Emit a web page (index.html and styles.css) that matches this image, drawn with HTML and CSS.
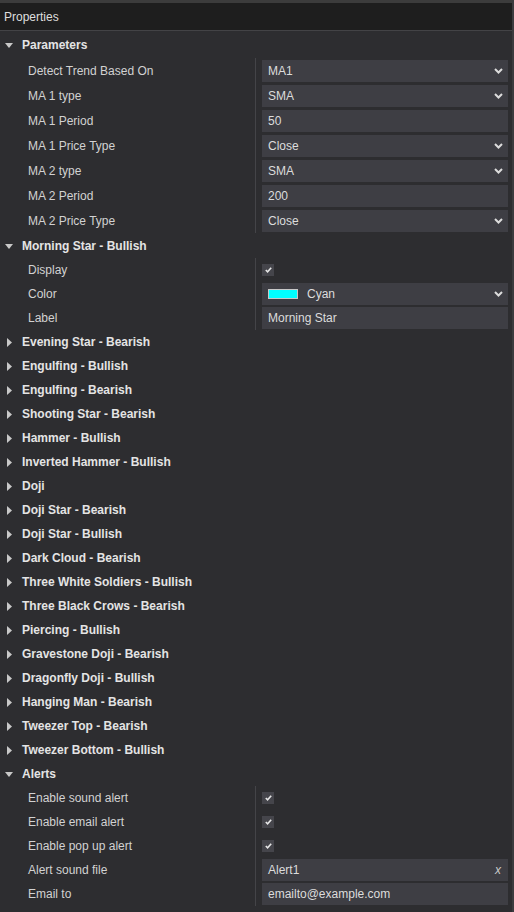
FILE: index.html
```html
<!DOCTYPE html>
<html>
<head>
<meta charset="utf-8">
<link rel="stylesheet" href="styles.css">
</head>
<body>
<div class="panel">
  <div class="titlebar">Properties</div>
  <div class="content">

    <div class="group params">
      <div class="ghead"><span class="tri"><svg width="8" height="5" viewBox="0 0 8 5"><polygon points="0,0 8,0 4,5" fill="#c8c8c8"/></svg></span><span class="gtitle">Parameters</span></div>
      <div class="gbody">
        <div class="row prow"><div class="lbl">Detect Trend Based On</div><div class="val"><div class="field select"><span>MA1</span><svg class="chev" width="9" height="6" viewBox="0 0 9 6"><polyline points="1,1 4.5,4.5 8,1" fill="none" stroke="#dcdcdc" stroke-width="2"/></svg></div></div></div>
        <div class="row prow"><div class="lbl">MA 1 type</div><div class="val"><div class="field select"><span>SMA</span><svg class="chev" width="9" height="6" viewBox="0 0 9 6"><polyline points="1,1 4.5,4.5 8,1" fill="none" stroke="#dcdcdc" stroke-width="2"/></svg></div></div></div>
        <div class="row prow"><div class="lbl">MA 1 Period</div><div class="val"><div class="field"><span>50</span></div></div></div>
        <div class="row prow"><div class="lbl">MA 1 Price Type</div><div class="val"><div class="field select"><span>Close</span><svg class="chev" width="9" height="6" viewBox="0 0 9 6"><polyline points="1,1 4.5,4.5 8,1" fill="none" stroke="#dcdcdc" stroke-width="2"/></svg></div></div></div>
        <div class="row prow"><div class="lbl">MA 2 type</div><div class="val"><div class="field select"><span>SMA</span><svg class="chev" width="9" height="6" viewBox="0 0 9 6"><polyline points="1,1 4.5,4.5 8,1" fill="none" stroke="#dcdcdc" stroke-width="2"/></svg></div></div></div>
        <div class="row prow"><div class="lbl">MA 2 Period</div><div class="val"><div class="field"><span>200</span></div></div></div>
        <div class="row prow"><div class="lbl">MA 2 Price Type</div><div class="val"><div class="field select"><span>Close</span><svg class="chev" width="9" height="6" viewBox="0 0 9 6"><polyline points="1,1 4.5,4.5 8,1" fill="none" stroke="#dcdcdc" stroke-width="2"/></svg></div></div></div>
      </div>
    </div>

    <div class="group">
      <div class="ghead"><span class="tri"><svg width="8" height="5" viewBox="0 0 8 5"><polygon points="0,0 8,0 4,5" fill="#c8c8c8"/></svg></span><span class="gtitle">Morning Star - Bullish</span></div>
      <div class="gbody">
        <div class="row"><div class="lbl">Display</div><div class="val"><span class="check"><svg width="7" height="6" viewBox="0 0 7 6"><polyline points="0.8,3 2.6,4.8 6.2,0.8" fill="none" stroke="#e6e6e6" stroke-width="1.6"/></svg></span></div></div>
        <div class="row"><div class="lbl">Color</div><div class="val"><div class="field select"><span class="swatch"></span><span class="cname">Cyan</span><svg class="chev" width="9" height="6" viewBox="0 0 9 6"><polyline points="1,1 4.5,4.5 8,1" fill="none" stroke="#dcdcdc" stroke-width="2"/></svg></div></div></div>
        <div class="row"><div class="lbl">Label</div><div class="val"><div class="field"><span>Morning Star</span></div></div></div>
      </div>
    </div>

    <div class="group closed"><div class="ghead"><span class="tri"><svg width="5" height="9" viewBox="0 0 5 9"><polygon points="0,0 5,4.5 0,9" fill="#c8c8c8"/></svg></span><span class="gtitle">Evening Star - Bearish</span></div></div>
    <div class="group closed"><div class="ghead"><span class="tri"><svg width="5" height="9" viewBox="0 0 5 9"><polygon points="0,0 5,4.5 0,9" fill="#c8c8c8"/></svg></span><span class="gtitle">Engulfing - Bullish</span></div></div>
    <div class="group closed"><div class="ghead"><span class="tri"><svg width="5" height="9" viewBox="0 0 5 9"><polygon points="0,0 5,4.5 0,9" fill="#c8c8c8"/></svg></span><span class="gtitle">Engulfing - Bearish</span></div></div>
    <div class="group closed"><div class="ghead"><span class="tri"><svg width="5" height="9" viewBox="0 0 5 9"><polygon points="0,0 5,4.5 0,9" fill="#c8c8c8"/></svg></span><span class="gtitle">Shooting Star - Bearish</span></div></div>
    <div class="group closed"><div class="ghead"><span class="tri"><svg width="5" height="9" viewBox="0 0 5 9"><polygon points="0,0 5,4.5 0,9" fill="#c8c8c8"/></svg></span><span class="gtitle">Hammer - Bullish</span></div></div>
    <div class="group closed"><div class="ghead"><span class="tri"><svg width="5" height="9" viewBox="0 0 5 9"><polygon points="0,0 5,4.5 0,9" fill="#c8c8c8"/></svg></span><span class="gtitle">Inverted Hammer - Bullish</span></div></div>
    <div class="group closed"><div class="ghead"><span class="tri"><svg width="5" height="9" viewBox="0 0 5 9"><polygon points="0,0 5,4.5 0,9" fill="#c8c8c8"/></svg></span><span class="gtitle">Doji</span></div></div>
    <div class="group closed"><div class="ghead"><span class="tri"><svg width="5" height="9" viewBox="0 0 5 9"><polygon points="0,0 5,4.5 0,9" fill="#c8c8c8"/></svg></span><span class="gtitle">Doji Star - Bearish</span></div></div>
    <div class="group closed"><div class="ghead"><span class="tri"><svg width="5" height="9" viewBox="0 0 5 9"><polygon points="0,0 5,4.5 0,9" fill="#c8c8c8"/></svg></span><span class="gtitle">Doji Star - Bullish</span></div></div>
    <div class="group closed"><div class="ghead"><span class="tri"><svg width="5" height="9" viewBox="0 0 5 9"><polygon points="0,0 5,4.5 0,9" fill="#c8c8c8"/></svg></span><span class="gtitle">Dark Cloud - Bearish</span></div></div>
    <div class="group closed"><div class="ghead"><span class="tri"><svg width="5" height="9" viewBox="0 0 5 9"><polygon points="0,0 5,4.5 0,9" fill="#c8c8c8"/></svg></span><span class="gtitle">Three White Soldiers - Bullish</span></div></div>
    <div class="group closed"><div class="ghead"><span class="tri"><svg width="5" height="9" viewBox="0 0 5 9"><polygon points="0,0 5,4.5 0,9" fill="#c8c8c8"/></svg></span><span class="gtitle">Three Black Crows - Bearish</span></div></div>
    <div class="group closed"><div class="ghead"><span class="tri"><svg width="5" height="9" viewBox="0 0 5 9"><polygon points="0,0 5,4.5 0,9" fill="#c8c8c8"/></svg></span><span class="gtitle">Piercing - Bullish</span></div></div>
    <div class="group closed"><div class="ghead"><span class="tri"><svg width="5" height="9" viewBox="0 0 5 9"><polygon points="0,0 5,4.5 0,9" fill="#c8c8c8"/></svg></span><span class="gtitle">Gravestone Doji - Bearish</span></div></div>
    <div class="group closed"><div class="ghead"><span class="tri"><svg width="5" height="9" viewBox="0 0 5 9"><polygon points="0,0 5,4.5 0,9" fill="#c8c8c8"/></svg></span><span class="gtitle">Dragonfly Doji - Bullish</span></div></div>
    <div class="group closed"><div class="ghead"><span class="tri"><svg width="5" height="9" viewBox="0 0 5 9"><polygon points="0,0 5,4.5 0,9" fill="#c8c8c8"/></svg></span><span class="gtitle">Hanging Man - Bearish</span></div></div>
    <div class="group closed"><div class="ghead"><span class="tri"><svg width="5" height="9" viewBox="0 0 5 9"><polygon points="0,0 5,4.5 0,9" fill="#c8c8c8"/></svg></span><span class="gtitle">Tweezer Top - Bearish</span></div></div>
    <div class="group closed"><div class="ghead"><span class="tri"><svg width="5" height="9" viewBox="0 0 5 9"><polygon points="0,0 5,4.5 0,9" fill="#c8c8c8"/></svg></span><span class="gtitle">Tweezer Bottom - Bullish</span></div></div>

    <div class="group">
      <div class="ghead"><span class="tri"><svg width="8" height="5" viewBox="0 0 8 5"><polygon points="0,0 8,0 4,5" fill="#c8c8c8"/></svg></span><span class="gtitle">Alerts</span></div>
      <div class="gbody">
        <div class="row"><div class="lbl">Enable sound alert</div><div class="val"><span class="check"><svg width="7" height="6" viewBox="0 0 7 6"><polyline points="0.8,3 2.6,4.8 6.2,0.8" fill="none" stroke="#e6e6e6" stroke-width="1.6"/></svg></span></div></div>
        <div class="row"><div class="lbl">Enable email alert</div><div class="val"><span class="check"><svg width="7" height="6" viewBox="0 0 7 6"><polyline points="0.8,3 2.6,4.8 6.2,0.8" fill="none" stroke="#e6e6e6" stroke-width="1.6"/></svg></span></div></div>
        <div class="row"><div class="lbl">Enable pop up alert</div><div class="val"><span class="check"><svg width="7" height="6" viewBox="0 0 7 6"><polyline points="0.8,3 2.6,4.8 6.2,0.8" fill="none" stroke="#e6e6e6" stroke-width="1.6"/></svg></span></div></div>
        <div class="row"><div class="lbl">Alert sound file</div><div class="val"><div class="field select"><span>Alert1</span><span class="clear">x</span></div></div></div>
        <div class="row"><div class="lbl">Email to</div><div class="val"><div class="field"><span>emailto@example.com</span></div></div></div>
      </div>
    </div>

  </div>
</div>
</body>
</html>
```

FILE: styles.css
```css
html, body {
  margin: 0;
  padding: 0;
  background: #2d2d30;
}
body {
  font-family: "Liberation Sans", Arial, sans-serif;
  font-size: 12px;
  color: #d4d4d4;
}
.panel {
  width: 512px;
  height: 912px;
  border-right: 2px solid #3b3b3e;
  background: #2d2d30;
  overflow: hidden;
}
.titlebar {
  height: 27px;
  border-top: 3px solid #3c3c3c;
  border-bottom: 1px solid #434346;
  background: #1e1e1e;
  color: #dedede;
  padding-left: 4px;
  display: flex;
  align-items: center;
}
.content {
  padding-top: 2px;
}
.ghead {
  height: 24px;
  display: flex;
  align-items: center;
}
.tri {
  width: 22px;
  display: flex;
  align-items: center;
  padding-left: 5px;
  box-sizing: border-box;
}
.closed .tri {
  padding-left: 7px;
}
.tri svg {
  display: block;
}
.gtitle {
  font-weight: bold;
  color: #e4e4e4;
}
.params .gbody {
  padding-top: 1px;
  padding-bottom: 1px;
}
.row {
  display: flex;
  height: 24px;
}
.row.prow {
  height: 25px;
}
.lbl {
  width: 255px;
  padding-left: 28px;
  box-sizing: border-box;
  display: flex;
  align-items: center;
  color: #d2d2d2;
}
.val {
  flex: 1;
  border-left: 1px solid #444448;
  padding: 0 4px 0 6px;
  display: flex;
  align-items: center;
}
.field {
  flex: 1;
  height: 22px;
  background: #3e3e44;
  display: flex;
  align-items: center;
  padding: 0 5px 0 6px;
  color: #dcdcdc;
}
.field span:first-child {
  flex: none;
}
.select {
  justify-content: space-between;
}
.chev {
  display: block;
}
.swatch {
  width: 28px;
  height: 8px;
  background: #00ffff;
  border: 1px solid #c8c8c8;
  margin-right: 9px;
}
.cname {
  flex: 1;
}
.clear {
  font-style: italic;
  color: #c8c8c8;
  margin-right: 2px;
}
.check {
  width: 12px;
  height: 12px;
  background: #45454b;
  display: flex;
  align-items: center;
  justify-content: center;
}
.check svg {
  display: block;
}
```
